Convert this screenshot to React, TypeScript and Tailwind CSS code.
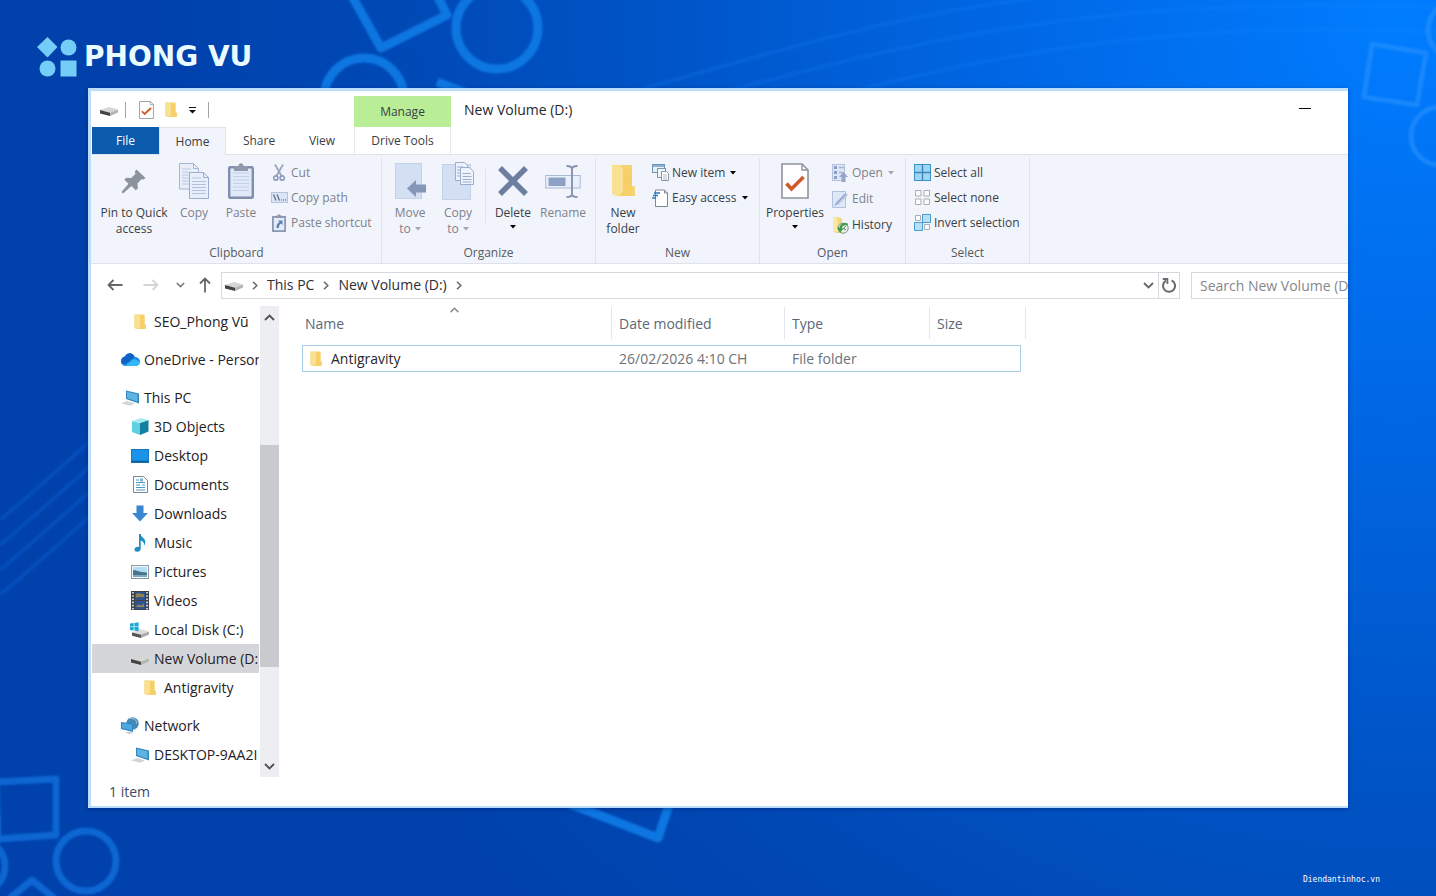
import React from 'react';

type IconProps = { className?: string };

/* ---------- Icons ---------- */

const DriveIcon = ({ className = 'w-[18px] h-[12px]' }: IconProps) => (
  <svg viewBox="0 0 18 12" className={className}>
    <path d="M0 6 9 3l9 2.500-8 3.500z" fill="#d6d6d4" />
    <path d="M0 6l10 2.800V12L0 9.400z" fill="#444" />
    <path d="M10 8.800 18 5.400v3L10 12z" fill="#b4b4b2" />
  </svg>
);

const SystemDriveIcon = () => (
  <svg viewBox="0 0 20 16" className="w-[20px] h-[16px]">
    <path d="M2 10.5 10 7l9 2.6-8 3.6z" fill="#dcdcda" />
    <path d="M2 10.5l9 2.2V16l-9-2.2z" fill="#555" />
    <path d="M11 12.8 19 9.6v3L11 16z" fill="#a9a9a7" />
    <path d="M0 1.6 3.7 1v3.4H0zM4.4.9 8.6.2v4.2H4.4zM0 5.1h3.7v3.4L0 7.9zM4.4 5.1h4.2v4.1l-4.2-.6z" fill="#18a9d6" />
  </svg>
);

const FolderIcon = ({ className = 'w-[12px] h-[16px]' }: IconProps) => (
  <svg viewBox="0 0 24 32" className={className} preserveAspectRatio="none">
    <path d="M1 1h20v20h3v9H6l-5-2z" fill="#f5d272" />
    <path d="M1 1h7l4 3v22l-4 5-7-3z" fill="#fae092" />
    <path d="M12 4h9v17l-3 9H8l4-4z" fill="#f6cd63" opacity=".7" />
  </svg>
);

const CheckDocIcon = ({ className = 'w-[15px] h-[18px]' }: IconProps) => (
  <svg viewBox="0 0 28 36" className={className} preserveAspectRatio="none">
    <path d="M1 1h20l6 6v28H1z" fill="#fff" stroke="#8f949c" strokeWidth="1.6" />
    <path d="M21 1v6h6" fill="none" stroke="#8f949c" strokeWidth="1.4" />
    <path d="M5.500 20.500l5 5.500 12-12" fill="none" stroke="#cf5b2c" strokeWidth="3.600" />
  </svg>
);

const Caret = ({ className = 'text-black' }: IconProps) => (
  <svg viewBox="0 0 6 4" className={`w-[6px] h-[4px] shrink-0 ${className}`}>
    <path d="M0 0h6L3 3.600z" fill="currentColor" />
  </svg>
);

const Chevron = ({ className = 'w-[6px] h-[9px]' }: IconProps) => (
  <svg viewBox="0 0 6 9" className={className}>
    <path d="M1 .8 4.800 4.500 1 8.200" fill="none" stroke="currentColor" strokeWidth="1.500" />
  </svg>
);

const ChevronDown = ({ className = 'w-[11px] h-[7px]' }: IconProps) => (
  <svg viewBox="0 0 11 7" className={className}>
    <path d="M1 1l4.500 4.500L10 1" fill="none" stroke="currentColor" strokeWidth="1.800" />
  </svg>
);

const PinIcon = () => (
  <svg viewBox="0 0 26 26" className="w-[26px] h-[26px]">
    <path d="M15.500 1.500 24.500 10l-2 1.600-2-.4-4 4.300.4 5-2.200 1.700-4.200-4.300L2 25.500.500 24l7-8.300-4.200-4 1.900-2 5 .3 4.200-4-.5-2.400z" fill="#8b939c" />
  </svg>
);

const CopyIcon = () => (
  <svg viewBox="0 0 30 36" className="w-[30px] h-[36px]">
    <path d="M.5.5h14l5 5V26H.5z" fill="#e9effa" stroke="#a5b6d6" />
    <path d="M14.500.5v5h5" fill="none" stroke="#a5b6d6" />
    <path d="M3 6h9M3 9h7M3 12h7M3 15h7M3 18h7M3 21h7" stroke="#b9c6df" />
    <path d="M10.500 9.500h14l5 5v21h-19z" fill="#e9effa" stroke="#9badd0" />
    <path d="M24.500 9.500v5h5" fill="none" stroke="#9badd0" />
    <path d="M13 15h9M13 18.500h14M13 21.500h14M13 24.500h14M13 27.500h14M13 30.500h14" stroke="#b3c1dc" />
  </svg>
);

const PasteIcon = () => (
  <svg viewBox="0 0 26 36" className="w-[26px] h-[36px]">
    <rect x="1.200" y="4.200" width="23.600" height="30.600" rx="1" fill="#dfe9f8" stroke="#7f8eac" strokeWidth="2.400" />
    <path d="M5 10h16M5 13.500h16M5 17h16M5 20.500h16M5 24h16M5 27.500h16" stroke="#c3d1e8" />
    <path d="M6 3h4.500c0-3.600 5-3.600 5 0H20v5H6z" fill="#8e99ae" />
  </svg>
);

const CutIcon = () => (
  <svg viewBox="0 0 12 18" className="w-[12px] h-[18px]">
    <path d="M2 .5 8.500 12M10 .5 3.500 12" stroke="#9aa6bd" strokeWidth="1.800" />
    <circle cx="2.800" cy="14" r="2.100" fill="none" stroke="#8a99b8" strokeWidth="1.600" />
    <circle cx="9.200" cy="14" r="2.100" fill="none" stroke="#8a99b8" strokeWidth="1.600" />
  </svg>
);

const CopyPathIcon = () => (
  <svg viewBox="0 0 17 11" className="w-[17px] h-[11px]">
    <rect x=".5" y=".5" width="16" height="10" fill="#dbe5f5" stroke="#b4c3de" />
    <path d="M2.500 2.500l2.500 6M6 2.500l2.500 6" stroke="#5b6b8c" strokeWidth="1.200" />
    <path d="M10 8h1.200M12 8h1.200M14 8h1.200" stroke="#5b6b8c" strokeWidth="1.200" />
  </svg>
);

const PasteShortcutIcon = () => (
  <svg viewBox="0 0 14 18" className="w-[14px] h-[18px]">
    <rect x=".9" y="2.900" width="12.200" height="14.200" fill="#e4ecf9" stroke="#7f8eac" strokeWidth="1.600" />
    <path d="M4 1.500h1.500L7 0l1.500 1.500H10V4H4z" fill="#8e99ae" />
    <path d="M6 6.500h4.500V11L9 9.600c-1.500 1-2.200 2.200-2 4.400H4.500c-.2-2.800 1-4.700 3-5.900z" fill="#5f7fb4" />
  </svg>
);

const MoveToIcon = () => (
  <svg viewBox="0 0 32 36" className="w-[32px] h-[36px]">
    <rect x="1.500" y=".5" width="26" height="35" fill="#d3dff3" stroke="#c3d1ea" />
    <path d="M13 25.500 22 17v4.500h10v8H22V34z" fill="#8496b9" />
  </svg>
);

const CopyToIcon = () => (
  <svg viewBox="0 0 32 38" className="w-[32px] h-[38px]">
    <rect x=".5" y="2.500" width="28" height="35" fill="#d3dff3" stroke="#c3d1ea" />
    <path d="M13.500.5h9l3 3v15h-12z" fill="#eef3fb" stroke="#9badd0" />
    <path d="M18.500 5.500h9l4 4v13h-13z" fill="#eef3fb" stroke="#9badd0" />
    <path d="M20.500 11.500h8M20.500 14.500h9M20.500 17.500h9M20.500 20h9M15 5h6M15 8h3M15 11h3M15 14h3" stroke="#9badd0" />
  </svg>
);

const DeleteIcon = () => (
  <svg viewBox="0 0 30 30" className="w-[30px] h-[30px]">
    <path d="M2 2l26 26M28 2 2 28" stroke="#6d7fa0" strokeWidth="5.500" />
  </svg>
);

const RenameIcon = () => (
  <svg viewBox="0 0 36 33" className="w-[36px] h-[33px]">
    <rect x=".7" y="10.500" width="34.500" height="12.500" fill="#eaf0fb" stroke="#a9b9d9" />
    <rect x="3.500" y="12.500" width="17" height="8.500" fill="#8ea1c4" />
    <path d="M21.500 1c3.500 0 5.500.8 5.500 3v25c0 2.200-2 3-5.500 3M32.500 1C29 1 27 1.800 27 4v25c0 2.200 2 3 5.500 3" fill="none" stroke="#8893ab" strokeWidth="1.900" />
  </svg>
);

const NewItemIcon = () => (
  <svg viewBox="0 0 17 17" className="w-[17px] h-[17px]">
    <rect x=".5" y=".5" width="12" height="8" fill="#e6eff8" stroke="#6e93b3" />
    <rect x="1" y="1" width="11" height="2" fill="#8db3d1" />
    <rect x="5.500" y="4.500" width="8" height="9" fill="#eef4fa" stroke="#7d97ae" />
    <path d="M9.500 7.500h5l2 2v7h-7z" fill="#fff" stroke="#8795a5" />
    <path d="M11 11h4M11 13h4M11 15h4" stroke="#a4afbb" strokeWidth=".8" />
  </svg>
);

const EasyAccessIcon = () => (
  <svg viewBox="0 0 16 18" className="w-[16px] h-[18px]">
    <path d="M3.500 1h9l3 3v13.500h-12z" fill="#fff" stroke="#7d8794" />
    <path d="M12.500 1v3h3" fill="none" stroke="#7d8794" />
    <path d="M2 4h6M1 6.500h5M0 9h4" stroke="#2f78bd" strokeWidth="1.400" />
  </svg>
);

const OpenIcon = () => (
  <svg viewBox="0 0 16 18" className="w-[16px] h-[18px]">
    <rect x=".5" y=".5" width="12" height="16" fill="#dde6f5" stroke="#b4c1da" />
    <path d="M2 2h3v3H2zM2 7h3v3H2zM2 12h3v3H2z" fill="#8d9fc2" />
    <path d="M7 3.500h5M7 8.500h4" stroke="#a3b3d1" strokeWidth="1.500" />
    <path d="M11.500 8 16 13h-2.500v5h-4v-5H7z" fill="#94a5c7" />
  </svg>
);

const EditIcon = () => (
  <svg viewBox="0 0 16 17" className="w-[16px] h-[17px]">
    <path d="M.5.5h13v16H.5z" fill="#dfe8f7" stroke="#b1c0dc" />
    <path d="M3 14.500 4 11l9.500-9.500L16 4l-9.500 9.500z" fill="#b6c5e0" />
    <path d="M3 14.500 13.500 3" stroke="#8699bd" />
  </svg>
);

const HistoryIcon = () => (
  <svg viewBox="0 0 17 17" className="w-[17px] h-[17px]">
    <path d="M1 0h4l5 1.500V16H4l-3-2z" fill="#f5d67c" />
    <path d="M1 0h3l1.500 2v13L1 14z" fill="#fbe8a8" />
    <circle cx="11.200" cy="11.200" r="5" fill="#e9efe9" stroke="#7d8a84" />
    <path d="M15.800 6.500c-4-1.500-7.800.5-8.300 4.200L5 10.500 8 16l3.600-4.800-1.800-.2c.4-2.300 2.400-3.400 6-2.500z" fill="#3f9e48" />
    <path d="M13.500 9l-2 3 2.500.5" fill="none" stroke="#566" strokeWidth=".8" />
  </svg>
);

const SelectAllIcon = () => (
  <svg viewBox="0 0 17 17" className="w-[17px] h-[17px]">
    <rect x=".5" y=".5" width="16" height="16" fill="#9fd6f5" stroke="#3c93c9" />
    <path d="M8.500 0v17M0 8.500h17" stroke="#3c86b8" strokeWidth="1.400" />
  </svg>
);

const SelectNoneIcon = () => (
  <svg viewBox="0 0 17 17" className="w-[17px] h-[17px]">
    <path d="M1.500 1.500h5.500v5.500H1.500zM10 1.500h5.500v5.500H10zM1.500 10h5.500v5.500H1.500zM10 10h5.500v5.500H10z" fill="#fbfcfe" stroke="#a9adb5" />
  </svg>
);

const InvertIcon = () => (
  <svg viewBox="0 0 17 17" className="w-[17px] h-[17px]">
    <path d="M1.500 1.500h5v5h-5zM10.500 10.500h5v5h-5z" fill="#fbfcfe" stroke="#a9adb5" />
    <path d="M8.500.5h8v8h-8zM.5 8.500h8v8h-8z" fill="#b5e0f8" stroke="#4a9bcd" />
  </svg>
);

const OneDriveIcon = () => (
  <svg viewBox="0 0 19 13" className="w-[19px] h-[13px]">
    <path d="M4 3.500C6-.8 12-.8 13.700 4c3 0 5.300 1.800 5.300 4.600C19 11 17.200 13 14.800 13H4.500C2 13 0 11.200 0 8.500 0 5.700 1.800 3.900 4 3.500z" fill="#1a8fe6" />
    <path d="M4 3.500C6-.8 12-.8 13.700 4L5 11 .6 10.500C-.7 7 1 4 4 3.500z" fill="#1263c6" />
    <path d="M4 13h10.800c2.400 0 4.200-2 4.200-4.200L13 6z" fill="#35b6f5" />
  </svg>
);

const ComputerIcon = () => (
  <svg viewBox="0 0 19 16" className="w-[19px] h-[16px]">
    <path d="M5 .5 18 3.500v10L5 9z" fill="#3585b8" />
    <path d="M6 1.800 16.500 4.300v7.400L6 8z" fill="#5cb4e4" />
    <path d="M0 13.500 6 11l8 2.500-5 2.300z" fill="#d0d5da" />
  </svg>
);

const ObjectsIcon = () => (
  <svg viewBox="0 0 18 17" className="w-[18px] h-[17px]">
    <path d="M1 3l8 2v12l-8-3z" fill="#5fd0e0" />
    <path d="M9 5l8.500-3v11.500L9 17z" fill="#11809e" />
    <path d="M1 3 10 0l7.500 2L9 5z" fill="#a5eaf0" />
  </svg>
);

const DesktopIcon = () => (
  <svg viewBox="0 0 18 14" className="w-[18px] h-[14px]">
    <rect x=".5" y=".5" width="17" height="13" fill="#1b93e8" stroke="#1776bd" />
    <path d="M.5 12.500h17" stroke="#0d5c9c" strokeWidth="1.500" />
  </svg>
);

const DocumentsIcon = () => (
  <svg viewBox="0 0 15 17" className="w-[15px] h-[17px]">
    <path d="M.5.5h10l4 4v12H.5z" fill="#fff" stroke="#7a8691" />
    <path d="M3 4h3M3 6.500h9M3 9h4M9 9h3M3 11.500h9M3 14h9" stroke="#4d96c4" />
    <path d="M7 2.500h3v3H7z" fill="#7db4d8" />
  </svg>
);

const DownloadsIcon = () => (
  <svg viewBox="0 0 16 17" className="w-[16px] h-[17px]">
    <path d="M4.500.5h7V8H16l-8 8.500L0 8h4.500z" fill="#3a87cf" />
  </svg>
);

const MusicIcon = () => (
  <svg viewBox="0 0 12 18" className="w-[12px] h-[18px]">
    <path d="M5 0h1.700c.3 3.500 5 4 4.600 8.500-.2 1.500-.6 2.300-1.300 3 .3-3-1-4.300-3.300-5v8.200c0 1.800-1.500 3.100-3.500 3.100C1.500 17.800.500 17 .500 15.600c0-2 2.200-3.300 4.500-2.700z" fill="#1e8fc0" />
  </svg>
);

const PicturesIcon = () => (
  <svg viewBox="0 0 18 14" className="w-[18px] h-[14px]">
    <rect x=".5" y=".5" width="17" height="13" fill="#f5f8fa" stroke="#8d979f" />
    <path d="M2 2h14v6H2z" fill="#b4dcf2" />
    <path d="M2 5.500c3-1 5 2 14 2V12H2z" fill="#49728f" />
    <path d="M2 10h14v2H2z" fill="#7ca9c4" />
  </svg>
);

const VideosIcon = () => (
  <svg viewBox="0 0 18 19" className="w-[18px] h-[19px]">
    <path d="M0 0h18v19H0z" fill="#3c4048" />
    <path d="M4 1h10v8H4zM4 10h10v8H4z" fill="#2f5590" />
    <path d="M5 3c3-2 6 1 8 0v3c-3 1-5-1-8 1zM5 16c3-5 5 1 8-4v4z" fill="#8f8350" />
    <path d="M2 1v18M16 1v18" stroke="#e3e6ea" strokeWidth="1.700" strokeDasharray="1.600 1.600" />
  </svg>
);

const NetworkIcon = () => (
  <svg viewBox="0 0 18 17" className="w-[18px] h-[17px]">
    <circle cx="11.500" cy="6.500" r="6.200" fill="#4589b4" />
    <path d="M9 1.500c4-1 7 2 6.500 5" fill="none" stroke="#a7d4ea" />
    <path d="M0 5l12 1.500V15L0 12z" fill="#2f86c6" />
    <path d="M1 6.300l10 1.200v6L1 11z" fill="#4fa9dd" />
    <path d="M4 15.500l5-1 3 1.500-4 1z" fill="#c5ccd2" />
  </svg>
);

const Arrow = ({ className = '' }: IconProps) => (
  <svg viewBox="0 0 16 12" className={`w-[16px] h-[12px] ${className}`}>
    <path d="M15.500 6H1.500M6.500 1l-5 5 5 5" fill="none" stroke="currentColor" strokeWidth="1.800" />
  </svg>
);

const RefreshIcon = () => (
  <svg viewBox="0 0 14 15" className="w-[14px] h-[15px]">
    <path d="M9.500 2.300a6 6 0 1 1-5.500.3" fill="none" stroke="#6b6b6b" strokeWidth="2" />
    <path d="M.8 1h4.600v5" fill="none" stroke="#6b6b6b" strokeWidth="1.800" />
  </svg>
);

/* ---------- Wallpaper ---------- */

const Wallpaper = () => (
  <svg
    viewBox="0 0 1436 896"
    preserveAspectRatio="xMidYMid slice"
    aria-hidden="true"
    className="absolute inset-0 w-full h-full"
  >
    <defs>
      <radialGradient id="glow" gradientUnits="userSpaceOnUse" cx="1400" cy="20" r="1250">
        <stop offset="0" stopColor="#007dff" />
        <stop offset="0.300" stopColor="#0068e6" />
        <stop offset="0.600" stopColor="#0054c6" />
        <stop offset="0.820" stopColor="#0048b4" />
        <stop offset="1" stopColor="#0041ac" />
      </radialGradient>
      <filter id="soft" x="-10%" y="-10%" width="120%" height="120%">
        <feGaussianBlur stdDeviation="1.200" />
      </filter>
    </defs>
    <rect width="1436" height="896" fill="url(#glow)" />
    <g fill="none" stroke="#1a8bff" strokeWidth="4" opacity="0.180" filter="url(#soft)">
      <path d="M600 100C800 50 1000-40 1436-10" />
      <path d="M600 125C850 60 1050-10 1436 8" />
      <path d="M700 130C900 80 1100 15 1436 32" />
      <path d="M0 520C60 470 100 430 140 400" />
      <path d="M0 545C60 495 100 455 140 425" />
      <path d="M0 570C60 520 100 480 140 450" />
      <path d="M0 595C60 545 100 505 140 475" />
    </g>
    <g fill="none" stroke="#0c76e0" strokeWidth="9" strokeLinejoin="round" filter="url(#soft)">
      <path d="M352-4 381 48l66-33-12-24" />
      <circle cx="497" cy="28" r="41" />
      <circle cx="364" cy="98" r="40" />
      <path d="M437 82l42 16" />
      <path d="M560 800l98 38 14-42" />
    </g>
    <g fill="none" stroke="#0b66d2" strokeWidth="7" strokeLinejoin="round" filter="url(#soft)">
      <path d="M-4 782l60-3v56l-58 4z" />
      <circle cx="86" cy="861" r="30" />
      <circle cx="-22" cy="866" r="27" />
      <path d="M8 900l24-20 24 20" />
    </g>
    <g fill="none" stroke="#2a92ff" strokeWidth="5" strokeLinejoin="round" opacity="0.600" filter="url(#soft)">
      <path d="M1372 44l54 9-9 52-53-8z" />
      <circle cx="1457" cy="30" r="29" />
      <circle cx="1440" cy="136" r="29" />
    </g>
  </svg>
);

/* ---------- Ribbon ---------- */

interface BigButtonProps {
  icon: React.ReactNode;
  lines: string[];
  width: string;
  caret?: boolean;
  muted?: boolean;
}

const BigButton: React.FC<BigButtonProps> = ({ icon, lines, width, caret, muted }) => (
  <button
    type="button"
    className={`flex flex-col items-center leading-4 shrink-0 whitespace-nowrap ${width} ${
      muted ? 'text-[#7d828c]' : 'text-[#3a3e46]'
    }`}
  >
    <span className="flex items-center justify-center h-10 mb-1">{icon}</span>
    {lines.map((line, i) => (
      <span key={line} className="flex items-center gap-1">
        {line}
        {caret && lines.length > 1 && i === lines.length - 1 && <Caret className="text-[#a0a5b0]" />}
      </span>
    ))}
    {caret && lines.length === 1 && (
      <span className="flex items-center h-3">
        <Caret />
      </span>
    )}
  </button>
);

interface SmallButtonProps {
  icon: React.ReactNode;
  label: string;
  height?: string;
  caret?: boolean;
  muted?: boolean;
}

const SmallButton: React.FC<SmallButtonProps> = ({ icon, label, height = 'h-[25px]', caret, muted }) => (
  <button
    type="button"
    className={`flex items-center gap-[3px] whitespace-nowrap ${height} ${
      muted ? 'text-[#7d828c]' : 'text-[#3a3e46]'
    }`}
  >
    <span className="flex items-center justify-center w-[18px] shrink-0">{icon}</span>
    <span>{label}</span>
    {caret && <Caret className={muted ? 'ml-[2px] text-[#a0a5b0]' : 'ml-[2px] text-black'} />}
  </button>
);

interface GroupProps {
  label: string;
  width: string;
  children: React.ReactNode;
}

const Group: React.FC<GroupProps> = ({ label, width, children }) => (
  <section
    aria-label={label}
    className={`flex flex-col shrink-0 mt-[3px] border-r border-[#dfe3ea] ${width}`}
  >
    <div className="flex flex-1 pl-1">{children}</div>
    <div className="text-center text-[#555a63] leading-5">{label}</div>
  </section>
);

const Ribbon = () => (
  <div className="flex h-[110px] pl-px bg-[#f1f4fb] border-y border-[#dfe2e8] text-[12px]">
    <Group label="Clipboard" width="w-[290px]">
      <div className="flex pt-[3px]">
        <BigButton icon={<PinIcon />} lines={['Pin to Quick', 'access']} width="w-[76px]" />
        <BigButton icon={<CopyIcon />} lines={['Copy']} width="w-[44px]" muted />
        <BigButton icon={<PasteIcon />} lines={['Paste']} width="w-[50px]" muted />
      </div>
      <div className="pt-[2px] pl-1">
        <SmallButton icon={<CutIcon />} label="Cut" muted />
        <SmallButton icon={<CopyPathIcon />} label="Copy path" muted />
        <SmallButton icon={<PasteShortcutIcon />} label="Paste shortcut" muted />
      </div>
    </Group>
    <Group label="Organize" width="w-[214px]">
      <div className="flex pt-[3px]">
        <BigButton icon={<MoveToIcon />} lines={['Move', 'to']} width="w-[48px]" caret muted />
        <BigButton icon={<CopyToIcon />} lines={['Copy', 'to']} width="w-[48px]" caret muted />
        <div className="w-px h-[54px] mt-2 mx-[3px] bg-[#dfe3ea]" />
        <BigButton icon={<DeleteIcon />} lines={['Delete']} width="w-[48px]" caret />
        <BigButton icon={<RenameIcon />} lines={['Rename']} width="w-[52px]" muted />
      </div>
    </Group>
    <Group label="New" width="w-[164px]">
      <div className="flex pt-[3px]">
        <BigButton
          icon={<FolderIcon className="w-[24px] h-[34px]" />}
          lines={['New', 'folder']}
          width="w-[46px]"
        />
      </div>
      <div className="pt-[2px] pl-[5px]">
        <SmallButton icon={<NewItemIcon />} label="New item" caret />
        <SmallButton icon={<EasyAccessIcon />} label="Easy access" caret />
      </div>
    </Group>
    <Group label="Open" width="w-[146px]">
      <div className="flex pt-[3px]">
        <BigButton
          icon={<CheckDocIcon className="w-[28px] h-[36px]" />}
          lines={['Properties']}
          width="w-[62px]"
          caret
        />
      </div>
      <div className="pt-[2px] pl-[5px]">
        <SmallButton icon={<OpenIcon />} label="Open" height="h-[26px]" caret muted />
        <SmallButton icon={<EditIcon />} label="Edit" height="h-[26px]" muted />
        <SmallButton icon={<HistoryIcon />} label="History" height="h-[26px]" />
      </div>
    </Group>
    <Group label="Select" width="w-[124px]">
      <div className="pt-[2px]">
        <div className="pl-[3px]">
          <SmallButton icon={<SelectAllIcon />} label="Select all" />
          <SmallButton icon={<SelectNoneIcon />} label="Select none" />
          <SmallButton icon={<InvertIcon />} label="Invert selection" />
        </div>
      </div>
    </Group>
  </div>
);

/* ---------- Title bar and tabs ---------- */

const Header = () => (
  <header className="flex h-[63px] pl-px">
    <div className="flex flex-col w-[262px] shrink-0">
      <div className="flex items-center h-9 pl-2 pt-[2px]">
        <DriveIcon />
        <div className="w-px h-4 ml-[7px] mr-[13px] bg-[#a5a5a5]" />
        <button type="button" aria-label="Properties">
          <CheckDocIcon />
        </button>
        <button type="button" aria-label="New folder" className="ml-[11px]">
          <FolderIcon />
        </button>
        <button type="button" aria-label="Customize Quick Access Toolbar" className="ml-3">
          <svg viewBox="0 0 7 7" className="w-[7px] h-[7px]">
            <path d="M0 .5h7" stroke="#111" />
            <path d="M0 3h7L3.500 6.500z" fill="#111" />
          </svg>
        </button>
        <div className="w-px h-4 ml-3 bg-[#a5a5a5]" />
      </div>
      <nav className="flex h-[27px] text-[12px] leading-7 text-[#3a3e46]">
        <button type="button" className="w-[67px] bg-[#0b5cad] text-white">
          File
        </button>
        <button type="button" className="relative w-[67px] h-7 bg-[#f1f4fb] border-x border-t border-[#dfe2e8]">
          Home
        </button>
        <button type="button" className="w-[66px]">
          Share
        </button>
        <button type="button" className="w-[60px]">
          View
        </button>
      </nav>
    </div>
    <div className="flex flex-col w-[97px] shrink-0 pt-[5px] text-[12px] text-[#3a3e46]">
      <div className="h-[31px] bg-[#b9ee96] text-center leading-8">Manage</div>
      <button type="button" className="h-[27px] leading-7 border-x border-[#e6e8ec]">
        Drive Tools
      </button>
    </div>
    <h1 className="flex-1 pl-[13px] pt-2 text-[14px] leading-[22px] text-[#26282c]">New Volume (D:)</h1>
    <button type="button" aria-label="Minimize" className="w-[49px] h-[35px]">
      <span className="block w-3 h-px bg-black" />
    </button>
  </header>
);

/* ---------- Address bar ---------- */

const AddressBar = () => (
  <div className="flex items-center h-[42px] pl-px text-[14px] text-[#2b2e34]">
    <button type="button" aria-label="Back" className="ml-[15px] text-[#666]">
      <Arrow />
    </button>
    <button type="button" aria-label="Forward" className="ml-5 text-[#d4d6da]" disabled>
      <Arrow className="rotate-180" />
    </button>
    <button type="button" aria-label="Recent locations" className="ml-[17px] text-[#777]">
      <ChevronDown className="w-[9px] h-[6px]" />
    </button>
    <button type="button" aria-label="Up" className="ml-3 text-[#666]">
      <Arrow className="rotate-90" />
    </button>
    <div className="flex items-center flex-1 h-[27px] ml-2 border border-[#d5d8de] leading-6">
      <span className="ml-[3px]">
        <DriveIcon />
      </span>
      <Chevron className="w-[6px] h-[9px] ml-[9px] text-[#666]" />
      <a href="#this-pc" className="h-[25px] ml-[9px] whitespace-nowrap">
        This PC
      </a>
      <Chevron className="w-[6px] h-[9px] ml-[9px] text-[#666]" />
      <a href="#volume" className="h-[25px] ml-[9px] whitespace-nowrap">
        New Volume (D:)
      </a>
      <Chevron className="w-[6px] h-[9px] ml-[9px] text-[#666]" />
      <button type="button" aria-label="Previous locations" className="ml-auto mr-1 text-[#666]">
        <ChevronDown />
      </button>
      <button
        type="button"
        aria-label="Refresh"
        className="flex items-center justify-center w-[21px] h-full border-l border-[#d5d8de]"
      >
        <RefreshIcon />
      </button>
    </div>
    {/* the search box runs on past the window's right edge */}
    <input
      type="search"
      aria-label="Search New Volume (D:)"
      placeholder="Search New Volume (D:)"
      className="w-[200px] h-[27px] shrink-0 ml-[11px] -mr-[43px] pl-2 border border-[#d5d8de] placeholder:text-[#85888e] outline-none"
    />
  </div>
);

/* ---------- Navigation pane ---------- */

interface NavItem {
  label: string;
  icon: React.ReactNode;
  indent: string;
  spaced?: boolean;
  active?: boolean;
}

const smallFolder = (
  <span className="flex justify-center w-[18px]">
    <FolderIcon />
  </span>
);

const navItems: NavItem[] = [
  { label: 'SEO_Phong Vũ', icon: smallFolder, indent: 'pl-[38px]' },
  { label: 'OneDrive - Person', icon: <OneDriveIcon />, indent: 'pl-[28px]', spaced: true },
  { label: 'This PC', icon: <ComputerIcon />, indent: 'pl-[28px]', spaced: true },
  { label: '3D Objects', icon: <ObjectsIcon />, indent: 'pl-[38px]' },
  { label: 'Desktop', icon: <DesktopIcon />, indent: 'pl-[38px]' },
  { label: 'Documents', icon: <DocumentsIcon />, indent: 'pl-[38px]' },
  { label: 'Downloads', icon: <DownloadsIcon />, indent: 'pl-[38px]' },
  { label: 'Music', icon: <MusicIcon />, indent: 'pl-[38px]' },
  { label: 'Pictures', icon: <PicturesIcon />, indent: 'pl-[38px]' },
  { label: 'Videos', icon: <VideosIcon />, indent: 'pl-[38px]' },
  { label: 'Local Disk (C:)', icon: <SystemDriveIcon />, indent: 'pl-[38px]' },
  { label: 'New Volume (D:)', icon: <DriveIcon />, indent: 'pl-[38px]', active: true },
  { label: 'Antigravity', icon: smallFolder, indent: 'pl-[48px]' },
  { label: 'Network', icon: <NetworkIcon />, indent: 'pl-[28px]', spaced: true },
  { label: 'DESKTOP-9AA2I', icon: <ComputerIcon />, indent: 'pl-[38px]' },
];

const Sidebar = () => (
  <aside className="flex w-[188px] shrink-0 pl-px">
    <ul className="flex-1 min-w-0 pt-px text-[14px] text-[#1f2125]">
      {navItems.map((item) => (
        <li key={item.label + item.indent} className={item.spaced ? 'mt-[9px]' : ''}>
          <a
            href="#nav"
            className={`flex items-center gap-1 h-[29px] mr-px overflow-hidden whitespace-nowrap ${item.indent} ${
              item.active ? 'bg-[#d5d6da]' : ''
            }`}
          >
            <span className="flex items-center justify-center w-5 shrink-0">{item.icon}</span>
            <span>{item.label}</span>
          </a>
        </li>
      ))}
    </ul>
    <div className="flex flex-col items-center w-[19px] bg-[#eceef1] text-[#505050]">
      <button type="button" aria-label="Scroll up" className="flex items-center justify-center w-full h-[22px]">
        <ChevronDown className="w-[11px] h-[7px] rotate-180" />
      </button>
      <div className="w-full flex-[117]" />
      <div className="w-full flex-[222] bg-[#c9cacd]" />
      <div className="w-full flex-[88]" />
      <button type="button" aria-label="Scroll down" className="flex items-center justify-center w-full h-[22px]">
        <ChevronDown />
      </button>
    </div>
  </aside>
);

/* ---------- File list ---------- */

const headClass = 'h-8 pl-[7px] font-normal text-left border-r border-[#e3e6ea]';

const FileList = () => (
  <main className="flex-1 min-w-0 pl-[23px] pt-px">
    <table className="table-fixed border-separate border-spacing-0 w-[724px] text-[14px] text-[#6d7178]">
      <colgroup>
        <col className="w-[310px]" />
        <col className="w-[173px]" />
        <col className="w-[145px]" />
        <col className="w-[91px]" />
        <col className="w-[5px]" />
      </colgroup>
      <thead className="text-[#5b6778]">
        <tr>
          <th scope="col" className="relative h-8 pl-[3px] font-normal text-left border-r border-[#e3e6ea]">
            Name
            <ChevronDown className="absolute left-[147px] top-0 w-[11px] h-[6px] rotate-180 text-[#8a8d92]" />
          </th>
          <th scope="col" className={headClass}>Date modified</th>
          <th scope="col" className={headClass}>Type</th>
          <th scope="col" colSpan={2} className={headClass}>Size</th>
        </tr>
      </thead>
      <tbody>
        <tr aria-hidden="true">
          <td className="h-[6px]" colSpan={5} />
        </tr>
        <tr>
          <td className="h-[27px] pl-[7px] border border-r-0 border-[#a6cfe6] text-[#26282c]">
            <span className="flex items-center gap-[9px]">
              <FolderIcon />
              Antigravity
            </span>
          </td>
          <td className="pl-[7px] border-y border-[#a6cfe6]">26/02/2026 4:10 CH</td>
          <td className="pl-[7px] border-y border-[#a6cfe6]">File folder</td>
          <td className="border border-l-0 border-[#a6cfe6]" />
          <td />
        </tr>
      </tbody>
    </table>
  </main>
);

/* ---------- Page ---------- */

const Logo = () => (
  <div className="flex items-center gap-[7px]">
    <svg viewBox="0 0 40 40" className="w-[40px] h-[40px]" fill="#74cdf6">
      <path d="M10.500 0 20.500 10 10.500 20.500 0 10z" />
      <circle cx="31.500" cy="10.500" r="8" />
      <circle cx="10.500" cy="31.500" r="8" />
      <path d="M23.500 23.500h16v16h-16z" />
    </svg>
    <span className="font-['DejaVu_Sans'] font-bold text-[28px] leading-8 text-[#e9fbff]">PHONG VU</span>
  </div>
);

export default function App() {
  return (
    <div className="relative flex flex-col min-h-screen overflow-hidden bg-[#0046b2] font-['Open_Sans',sans-serif]">
      <Wallpaper />
      <div className="relative flex items-end h-[88px] pl-[37px] pb-[11px]">
        <Logo />
      </div>
      <div className="relative flex flex-col flex-1 mx-[88px] overflow-hidden bg-white border-t-[3px] border-l-[3px] border-b-2 border-[#bcdcf8] shadow-[0_1px_4px_rgba(0,20,80,0.4)]">
        <Header />
        <Ribbon />
        <AddressBar />
        <div className="flex flex-1">
          <Sidebar />
          <FileList />
        </div>
        <footer className="flex items-center h-[29px] pl-[18px] text-[14px] text-[#3c4a63]">1 item</footer>
      </div>
      <div className="relative flex items-center justify-end h-[88px] pt-[55px] pr-14 font-['DejaVu_Sans_Mono',monospace] text-[8px] text-white">
        Diendantinhoc.vn
      </div>
    </div>
  );
}
